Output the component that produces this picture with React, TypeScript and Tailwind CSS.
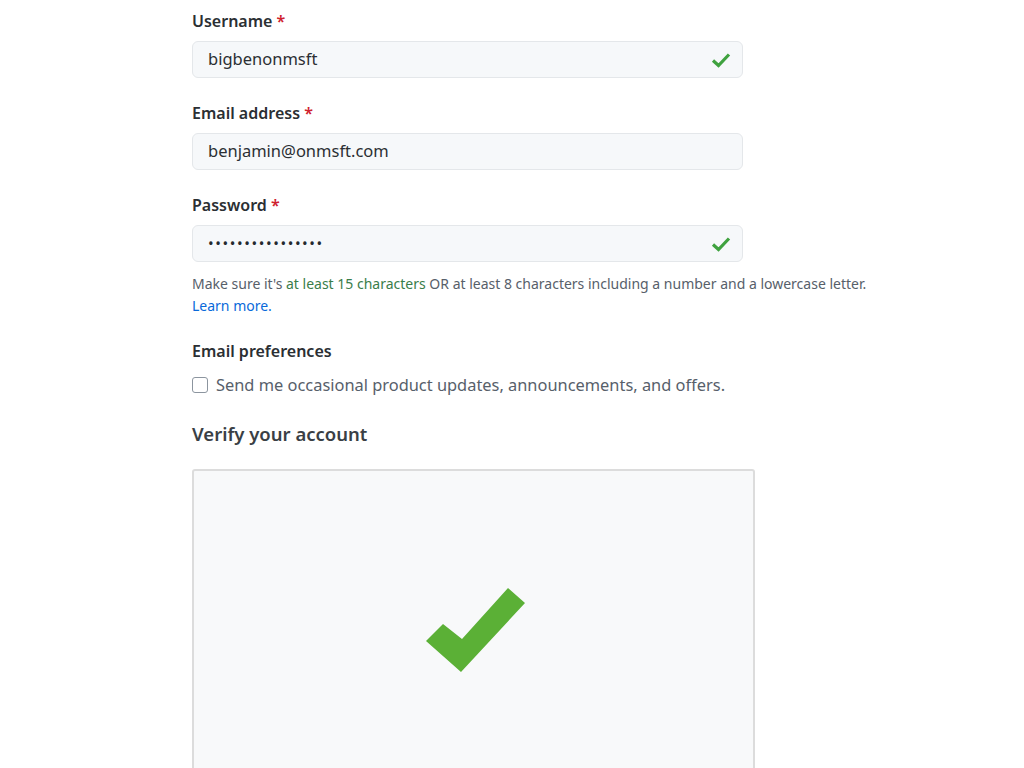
import React from "react";

type FieldProps = {
  label: string;
  value: string;
  valid?: boolean;
  password?: boolean;
};

const SmallCheck = () => (
  <svg width="20" height="16" viewBox="0 0 20 16" fill="none">
    <polyline points="2,8.5 7.5,13.5 18,2.5" stroke="#3fa23f" strokeWidth="3.2" strokeLinejoin="miter" />
  </svg>
);

const Field: React.FC<FieldProps> = ({ label, value, valid, password }) => {
  return (
    <div className="mb-[25px]">
      <div className="text-[16px] font-semibold text-[#2b2f33] leading-[20px] mb-[10px]">
        {label} <span className="text-[#cf222e]">*</span>
      </div>
      <div className="w-[551px] h-[37px] rounded-[6px] border border-[#e4e7ea] bg-[#f6f8fa] flex items-center justify-between pl-[15px] pr-[11px]">
        <span className={password ? "text-[15px] tracking-[1.6px] text-[#24292e]" : "text-[16.5px] text-[#2b2f33]"}>
          {value}
        </span>
        {valid && <SmallCheck />}
      </div>
    </div>
  );
};

export default function App() {
  return (
    <div className="min-h-[768px] bg-white pl-[192px] pt-[11px]" style={{ fontFamily: '"Noto Sans", "Open Sans", sans-serif' }}>
      <Field label="Username" value="bigbenonmsft" valid />
      <Field label="Email address" value="benjamin@onmsft.com" />
      <Field label="Password" value="••••••••••••••••" valid password />

      <div className="-mt-[14px] text-[14px] leading-[22px] text-[#57606a]">
        Make sure it's <span className="text-[#3a7d4a]">at least 15 characters</span> OR at least 8 characters including a number and a lowercase letter.
        <br />
        <span className="text-[#0969da]">Learn more.</span>
      </div>

      <div className="mt-[24px] text-[16px] font-semibold text-[#2b2f33] leading-[20px]">Email preferences</div>
      <label className="mt-[12px] flex items-center gap-[8px] text-[16.4px] text-[#57606a]">
        <span className="w-[16px] h-[16px] rounded-[3px] border border-[#8c959f] bg-white inline-block" />
        Send me occasional product updates, announcements, and offers.
      </label>

      <div className="mt-[24px] text-[18.5px] font-semibold text-[#3a3f45] leading-[24px]">Verify your account</div>

      <div className="mt-[23px] w-[563px] h-[320px] rounded-[3px] border-2 border-[#dcdcdc] bg-[#f8f9fa] relative">
        <svg className="absolute left-[232px] top-[116px]" width="101" height="86" viewBox="427 586 101 86">
          <polygon points="427,640 444,623 463,638 509,587 526,602 462,671" fill="#5bb036" />
        </svg>
      </div>
    </div>
  );
}
